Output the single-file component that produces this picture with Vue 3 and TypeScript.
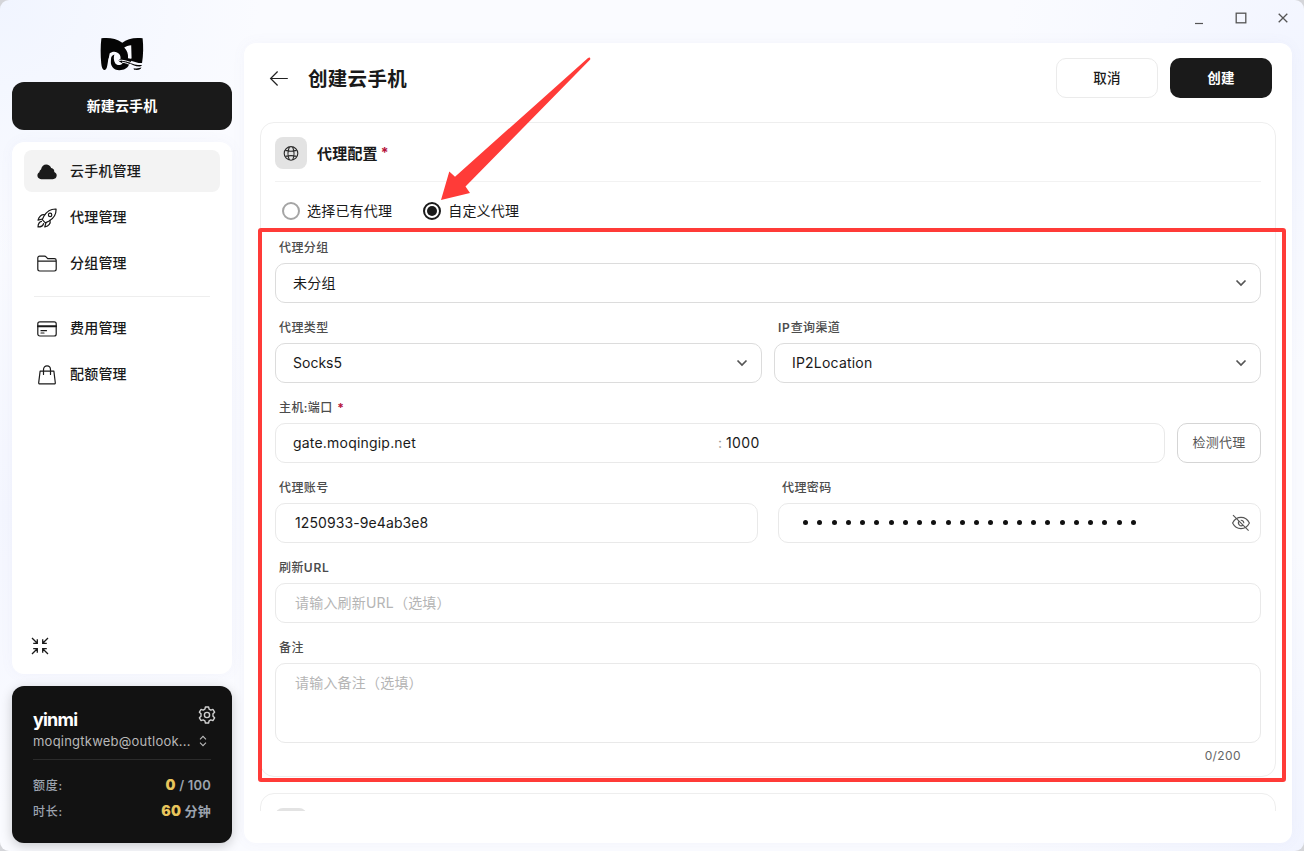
<script setup lang="ts">
import { ref } from 'vue'

interface NavItem {
  id: string
  label: string
}

const primaryNav: NavItem[] = [
  { id: 'cloud', label: '云手机管理' },
  { id: 'rocket', label: '代理管理' },
  { id: 'folder', label: '分组管理' },
]
const billingNav: NavItem[] = [
  { id: 'card', label: '费用管理' },
  { id: 'bag', label: '配额管理' },
]

const active = ref('cloud')
const mode = ref<'existing' | 'custom'>('custom')
const host = ref('gate.moqingip.net')
const port = ref('1000')
const account = ref('1250933-9e4ab3e8')
const passwordLength = 24
const refreshUrl = ref('')
const note = ref('')
</script>

<template>
  <div class="window">
    <aside class="sidebar">
      <div class="logo">
        <svg width="44" height="34" viewBox="0 0 44 34">
          <path d="M1.4 1.3C9 .3 16 1.4 22.3 5.7C27 1.8 34 .2 42.6 1.2C43.5 9 43.4 18 42 26.2C38 26.4 34.6 24.6 30.8 23.8C32 25.4 30 26.4 28.8 28C27.4 31.2 24 33.2 19.4 33.2C13.2 33.2 10.4 28.6 10.6 23C10.7 20.4 11.1 18.4 11.8 16.6C9.4 18 8.4 21 7.8 25.4C7.2 29.6 6.6 32.4 4.8 32.9C2.6 33.2 1.7 30.5 1.2 26C.5 18.5.4 8.8 1.4 1.3Z" fill="#050505" />
          <path d="M9.6 16.6C12.6 13.6 17 14.2 19.4 17.2C20.6 18.8 20.8 20.6 20.4 22.2C18.4 22.4 18.2 23.6 19.6 24.8L22.6 26.4C20 28.8 16.8 28.4 15.2 26.2C13.4 23.6 13.6 19.6 14.4 17.6C13 18 12 18.8 11.2 20.4L10.4 26.4L8.4 25Z" fill="#fafbff" />
          <path d="M24.2 10.6C26 9 28.6 8.4 31.2 8.2L31.6 21.6C30.4 21.7 29.2 21.6 28 21.2C28.4 17 27 13.4 24.2 10.6Z" fill="#fafbff" />
          <path d="M19 23.4C26 22.2 31 27.6 42.6 26.6M22 25.2C28 25.6 31.6 30 41.8 29.4" fill="none" stroke="#fafbff" stroke-width="1" />
          <path d="M28 25.4C32 26 35 28.6 42 28C41.6 28.8 41 29.4 39.6 29.4C34.8 29.4 32 27.4 28 25.4ZM33.6 31.2C36.6 31.7 39.5 31.3 41.4 30.6C41 32.8 38.6 33.2 34 32.8Z" fill="#050505" />
        </svg>
      </div>
      <button class="new-phone">新建云手机</button>

      <nav class="nav">
        <a v-for="item in primaryNav" :key="item.id" class="nav-item" :class="{ active: active === item.id }" @click="active = item.id">
          <svg v-if="item.id === 'cloud'" width="20" height="20" viewBox="0 0 20 20">
            <path d="M4 7.4C4.8 4.2 6.7 2.4 9.2 2.4C11.6 2.4 13.3 3.8 14.2 6C16.3 6.2 17.5 8 17.3 9.9C18.9 10.6 19.8 12 19.7 13.6C19.6 15.8 18 17.2 15.8 17.2H4.2C2 17.2.4 15.7.4 13.6C.4 12 1.2 10.8 2.4 10.2C2.3 9 3 7.9 4 7.4Z" fill="#1a1a1a" />
          </svg>
          <svg v-else-if="item.id === 'rocket'" width="20" height="20" viewBox="0 0 20 20" class="line">
            <path d="M19.1 1C14.2.8 9.9 3.1 7 8L5.2 11.7L8.4 14.9L12.1 13C17 10.2 19.2 5.8 19.1 1Z" />
            <circle cx="13.1" cy="6.9" r="1.7" />
            <path d="M7.7 6.9C4.8 6.1 2.1 8 1 12.2L5.4 11M13 12.4C13.9 15.2 12 17.9 7.8 19L8.9 14.8M4.5 13.4C2.2 14 1.1 16 1 19C4 18.9 6.1 17.8 6.6 15.5" />
          </svg>
          <svg v-else width="20" height="20" viewBox="0 0 20 20" class="line">
            <path d="M.8 15.1V4C.8 2.9 1.6 2.2 2.6 2.2H7.5C8.2 2.2 8.7 2.4 9.1 2.9L10.7 4.6H17.3C18.4 4.6 19.2 5.4 19.2 6.4V15.1C19.2 16.2 18.4 17 17.3 17H2.7C1.6 17 .8 16.2.8 15.1ZM1 7.1H19" />
          </svg>
          <span>{{ item.label }}</span>
        </a>
        <div class="nav-divider"></div>
        <a v-for="item in billingNav" :key="item.id" class="nav-item" :class="{ active: active === item.id }" @click="active = item.id">
          <svg v-if="item.id === 'card'" width="20" height="20" viewBox="0 0 20 20" class="line">
            <rect x=".8" y="2.8" width="18.4" height="14.2" rx="2" />
            <path d="M1 7.2H19" stroke-width="2" />
            <path d="M4 11.7H9.5M4 14H7" />
          </svg>
          <svg v-else width="20" height="20" viewBox="0 0 20 20" class="line">
            <path d="M3.1 6.2H16.9L18.3 17.7C18.4 18.4 18 18.9 17.3 18.9H2.7C2 18.9 1.6 18.4 1.7 17.7ZM6.5 9.4V4.7C6.5 2.4 8 .8 10 .8C12 .8 13.5 2.4 13.5 4.7V9.4" />
          </svg>
          <span>{{ item.label }}</span>
        </a>
        <button class="collapse" aria-label="collapse">
          <svg width="18" height="18" viewBox="0 0 18 18">
            <path d="M1 1L6.3 6.3M6.3 2.3V6.3H2.2M17 1L11.7 6.3M11.7 2.3V6.3H15.8M1 17L6.3 11.7M6.3 15.7V11.7H2.2M17 17L11.7 11.7M11.7 15.7V11.7H15.8" fill="none" stroke="#1a1a1a" stroke-width="1.3" />
          </svg>
        </button>
      </nav>

      <section class="profile">
        <div class="profile-head">
          <strong>yinmi</strong>
          <svg width="18" height="18" viewBox="0 0 18 18" fill="none" stroke="#d0d0d0" stroke-width="1.4" stroke-linejoin="round">
            <path d="M7.4 1H10.6L11.1 3.1L12.8 4.1L14.9 3.4L16.6 6.2L15 7.8V10.2L16.6 11.8L14.9 14.6L12.8 13.9L11.1 14.9L10.6 17H7.4L6.9 14.9L5.2 13.9L3.1 14.6L1.4 11.8L3 10.2V7.8L1.4 6.2L3.1 3.4L5.2 4.1L6.9 3.1Z" />
            <circle cx="9" cy="9" r="2.6" />
          </svg>
        </div>
        <div class="mail">
          <span>moqingtkweb@outlook...</span>
          <svg width="8" height="12" viewBox="0 0 8 12"><path d="M1 4.3L4 1.3L7 4.3M1 7.7L4 10.7L7 7.7" fill="none" stroke="#bbb" stroke-width="1.1" /></svg>
        </div>
        <div class="quota first"><span class="name">额度:</span><span class="value"><b>0</b> / 100</span></div>
        <div class="quota"><span class="name">时长:</span><span class="value"><b>60</b> 分钟</span></div>
      </section>
    </aside>

    <div class="content">
      <div class="titlebar">
        <svg width="12" height="14" viewBox="0 0 12 14"><path d="M2 12.5H10" stroke="#555" stroke-width="1.2" /></svg>
        <svg width="12" height="12" viewBox="0 0 12 12"><rect x="1.2" y="1.2" width="9.6" height="9.6" fill="none" stroke="#555" stroke-width="1.3" /></svg>
        <svg width="12" height="12" viewBox="0 0 12 12"><path d="M1.7 1.7L10.3 10.3M10.3 1.7L1.7 10.3" stroke="#555" stroke-width="1.3" /></svg>
      </div>

      <main class="panel">
        <header class="page-head">
          <svg class="back" width="20" height="16" viewBox="0 0 20 16"><path d="M18.8 8.5H1.8M8.6 1.5L1.6 8.5L8.6 15.5" fill="none" stroke="#222" stroke-width="1.2" /></svg>
          <h1>创建云手机</h1>
          <button class="btn"><span>取消</span></button>
          <button class="btn primary"><span>创建</span></button>
        </header>

        <div class="scroll">
          <section class="card">
            <div class="card-head">
              <span class="badge">
                <svg width="16" height="16" viewBox="0 0 16 16" fill="none" stroke="#2a2a2a" stroke-width="1.1">
                  <circle cx="8" cy="8.4" r="6.8" />
                  <path d="M2.3 5.4Q8 7 13.7 5.4M2.3 11.4Q8 9.8 13.7 11.4M6.4 1.9C4.6 5.9 4.6 10.9 6.4 14.9M9.6 1.9C11.4 5.9 11.4 10.9 9.6 14.9" />
                </svg>
              </span>
              <h2>代理配置</h2><i class="req">*</i>
            </div>

            <div class="radios">
              <label @click="mode = 'existing'"><i class="radio" :class="{ on: mode === 'existing' }"></i><span>选择已有代理</span></label>
              <label @click="mode = 'custom'"><i class="radio" :class="{ on: mode === 'custom' }"></i><span>自定义代理</span></label>
            </div>

            <div class="field">
              <div class="label">代理分组</div>
              <div class="box select"><span>未分组</span><svg width="12" height="8" viewBox="0 0 12 8"><path d="M1.5 1.5L6 6L10.5 1.5" /></svg></div>
            </div>
            <div class="row types">
              <div class="field">
                <div class="label">代理类型</div>
                <div class="box select"><span class="socks">Socks5</span><svg width="12" height="8" viewBox="0 0 12 8"><path d="M1.5 1.5L6 6L10.5 1.5" /></svg></div>
              </div>
              <div class="field">
                <div class="label"><b>IP</b>查询渠道</div>
                <div class="box select"><span>IP2Location</span><svg width="12" height="8" viewBox="0 0 12 8"><path d="M1.5 1.5L6 6L10.5 1.5" /></svg></div>
              </div>
            </div>
            <div class="row hostrow">
              <div class="field">
                <div class="label">主机:端口 <i class="req">*</i></div>
                <div class="box pair"><span class="host">{{ host }}</span><span class="colon">:</span><span class="port">{{ port }}</span></div>
              </div>
              <button class="check"><span>检测代理</span></button>
            </div>
            <div class="row auth">
              <div class="field">
                <div class="label">代理账号</div>
                <div class="box text"><span class="account">{{ account }}</span></div>
              </div>
              <div class="field">
                <div class="label">代理密码</div>
                <div class="box text password">
                  <span class="dots"><i v-for="n in passwordLength" :key="n"></i></span>
                  <svg width="20" height="18" viewBox="0 0 20 18" fill="none" stroke="#555" stroke-width="1.15">
                    <path d="M1.6 9C5.4 1.5 14.6 1.5 18.4 9C14.6 16.5 5.4 16.5 1.6 9Z" />
                    <path d="M8 7A3 3 0 0 0 12 11.3M9.7 6.3A2.8 2.8 0 0 1 12.8 9.2M2 1.2L17.6 16.7" />
                  </svg>
                </div>
              </div>
            </div>
            <div class="field">
              <div class="label">刷新<b>URL</b></div>
              <div class="box text"><span class="hint">{{ refreshUrl || '请输入刷新URL（选填）' }}</span></div>
            </div>
            <div class="field">
              <div class="label">备注</div>
              <div class="box area"><span class="hint">{{ note || '请输入备注（选填）' }}</span></div>
              <div class="count">{{ note.length }}/200</div>
            </div>
          </section>

          <section class="card next"><span class="badge"></span></section>
        </div>
      </main>
    </div>

    <div class="highlight"></div>
    <svg class="arrow" width="160" height="150" viewBox="440 55 160 150">
      <path d="M441 200L449.3 171.5L455 176.7L588 58Q590.7 56.7 590.2 59.5L465.5 186.5L470 193Z" fill="#ff3b38" />
    </svg>
  </div>
</template>

<style>
body {
  margin: 0;
  background: #d4d5d9;
}
</style>

<style scoped>
.window {
  position: relative;
  box-sizing: border-box;
  width: 1304px;
  height: 851px;
  display: flex;
  gap: 12px;
  padding: 0 12px 8px;
  overflow: hidden;
  border-radius: 9px;
  background:
    radial-gradient(circle at 0 0, #f1f5ff 0, rgba(241, 245, 255, 0) 260px),
    radial-gradient(circle at 100% 8%, #f2f5ff 0, rgba(242, 245, 255, 0) 300px),
    radial-gradient(circle at 100% 100%, #f1f4ff 0, rgba(241, 244, 255, 0) 300px),
    radial-gradient(circle at 0 60%, #f4f6ff 0, rgba(244, 246, 255, 0) 300px),
    #fafbff;
  color: #1a1a1a;
  font-family: Inter, "Noto Sans CJK SC", sans-serif;
  font-size: 14px;
  letter-spacing: 0.2px;
}
.window *,
.window *::before {
  box-sizing: border-box;
}
button {
  padding: 0;
  font: inherit;
  letter-spacing: inherit;
  color: inherit;
}
i {
  font-style: normal;
}

.sidebar {
  width: 220px;
  flex: none;
  display: flex;
  flex-direction: column;
}
.logo {
  height: 82px;
  padding: 37px 0 0 88px;
}
.logo svg {
  display: block;
}
.new-phone {
  height: 48px;
  padding-bottom: 2px;
  border: 0;
  border-radius: 12px;
  background: #1a1a1a;
  color: #fff;
  font-weight: 700;
  letter-spacing: 0.1px;
}
.nav {
  display: flex;
  flex-direction: column;
  height: 532px;
  margin: 12px 0;
  padding: 8px 12px;
  border-radius: 12px;
  background: #fff;
  box-shadow: 0 0 14px rgba(110, 120, 180, 0.05);
}
.nav-item {
  display: flex;
  align-items: center;
  gap: 13px;
  height: 42px;
  margin-bottom: 4px;
  padding: 0 13px;
  border-radius: 8px;
  font-weight: 500;
}
.nav-item.active {
  background: #f3f3f3;
}
.nav-item span {
  padding-bottom: 2px;
}
.nav-item svg {
  flex: none;
  margin-top: 2px;
}
.line {
  fill: none;
  stroke: #1a1a1a;
  stroke-width: 1.2;
  stroke-linejoin: round;
  stroke-linecap: round;
}
.nav-divider {
  height: 1px;
  margin: 8px 10px 10px;
  background: #eee;
}
.collapse {
  width: 18px;
  height: 18px;
  margin: auto 0 11px 7px;
  border: 0;
  background: none;
}
.collapse svg {
  display: block;
}

.profile {
  height: 157px;
  padding: 20px 21px 0;
  border-radius: 12px;
  background: #121212;
  box-shadow: 0 3px 12px rgba(0, 0, 0, 0.2);
}
.profile-head {
  display: flex;
  justify-content: space-between;
  height: 25px;
  margin-right: -5px;
}
.profile-head strong {
  font-size: 18px;
  line-height: 27px;
  font-weight: 700;
  letter-spacing: -0.8px;
  color: #fff;
}
.mail {
  display: flex;
  align-items: center;
  gap: 8px;
  height: 20px;
  font-size: 13px;
  letter-spacing: 0.23px;
  color: #b8b8b8;
  white-space: nowrap;
}
.mail span {
  padding-bottom: 1px;
}
.quota {
  display: flex;
  align-items: center;
  justify-content: space-between;
  height: 26px;
  font-size: 12px;
  font-weight: 500;
  color: #9ca3af;
}
.quota.first {
  height: 39px;
  margin-top: 8px;
  padding-top: 12px;
  border-top: 1px solid #2b2b2b;
}
.quota .name {
  letter-spacing: 0.7px;
}
.quota span {
  padding-bottom: 2px;
}
.value {
  font-size: 13px;
  font-weight: 600;
}
.value b {
  font-size: 14px;
  color: #e8c55c;
}

.content {
  flex: 1;
  min-width: 0;
}
.titlebar {
  display: flex;
  align-items: center;
  justify-content: flex-end;
  gap: 30px;
  height: 43px;
  padding: 0 3px 7px 0;
}
.panel {
  height: 800px;
  padding: 15px 16px 0;
  border-radius: 12px;
  background: #fff;
  box-shadow: 0 0 14px rgba(110, 120, 180, 0.05);
}
.page-head {
  display: flex;
  align-items: center;
  gap: 12px;
  height: 40px;
  padding: 0 4px 0 9px;
}
.page-head h1 {
  flex: 1;
  margin: 0 0 0 7px;
  padding-bottom: 2px;
  font-size: 19.5px;
  font-weight: 700;
  letter-spacing: 0.3px;
}
.btn {
  width: 102px;
  height: 40px;
  padding-bottom: 2px;
  border: 1px solid #ebebeb;
  border-radius: 10px;
  background: #fff;
  font-size: 13.5px;
  font-weight: 500;
}
.btn.primary {
  border: 0;
  background: #1a1a1a;
  color: #fff;
  font-weight: 700;
}

.scroll {
  height: 689px;
  margin-top: 24px;
  overflow: hidden;
}
.card {
  height: 655px;
  padding: 14px 14px 0;
  border: 1px solid #eee;
  border-radius: 14px;
}
.card.next {
  height: 100px;
  margin-top: 16px;
}
.card-head {
  display: flex;
  align-items: center;
  height: 45px;
  padding-bottom: 13px;
  border-bottom: 1px solid #f2f2f2;
}
.badge {
  display: flex;
  align-items: center;
  justify-content: center;
  width: 32px;
  height: 32px;
  border-radius: 8px;
  background: #e3e3e3;
}
.card-head h2 {
  margin: 0 3px 0 10px;
  padding-bottom: 1px;
  font-size: 15px;
  font-weight: 700;
}
.req {
  color: #b5123b;
  font-weight: 700;
}
.radios {
  display: flex;
  gap: 31px;
  height: 57px;
  padding: 0 7px;
}
.radios label {
  display: flex;
  align-items: center;
  gap: 7px;
}
.radios span {
  padding-bottom: 2px;
}
.radio {
  display: grid;
  place-items: center;
  width: 18px;
  height: 18px;
  border: 2px solid #a5a5a5;
  border-radius: 50%;
}
.radio.on {
  border-color: #1a1a1a;
}
.radio.on::before {
  content: "";
  width: 10px;
  height: 10px;
  border-radius: 50%;
  background: #1a1a1a;
}

.field {
  height: 80px;
  flex: 1;
  min-width: 0;
}
.label {
  height: 24px;
  padding: 0 4px;
  font-size: 12px;
  line-height: 17px;
  font-weight: 500;
  color: #4c4c4c;
  letter-spacing: 0.4px;
}
.label b {
  font-weight: 600;
  letter-spacing: 0.8px;
}
.box {
  display: flex;
  align-items: center;
  height: 40px;
  border: 1px solid #e9e9e9;
  border-radius: 10px;
  background: #fff;
}
.box > span {
  padding-bottom: 2px;
}
.box.select {
  justify-content: space-between;
  padding: 0 13px 0 17px;
  border-color: #dcdcdc;
}
.socks {
  letter-spacing: 0;
}
.select svg {
  fill: none;
  stroke: #555;
  stroke-width: 1.7;
}
.box.text {
  padding: 0 9px 0 19px;
}
.account {
  letter-spacing: 0.1px;
}
.row {
  display: flex;
  gap: 12px;
}
.row.auth {
  gap: 20px;
}
.hostrow .req {
  margin-left: 1px;
}
.pair {
  padding-left: 17px;
}
.host {
  width: 425px;
}
.colon {
  width: 8px;
  color: #999;
}
.port {
  letter-spacing: 0.4px;
}
.check {
  width: 84px;
  height: 40px;
  margin-top: 24px;
  padding-bottom: 3px;
  border: 1px solid #d5d5d5;
  border-radius: 10px;
  background: #fff;
  color: #555;
  font-size: 13px;
}
.password {
  justify-content: space-between;
}
.box.password {
  padding-left: 24px;
}
.dots {
  display: flex;
  gap: 9.26px;
}
.dots i {
  width: 5px;
  height: 5px;
  border-radius: 50%;
  background: #111;
}
.hint {
  color: #b5b5b5;
}
.box.area {
  height: 80px;
  align-items: flex-start;
  padding: 8px 19px;
}
.count {
  padding-right: 20px;
  font-size: 12px;
  line-height: 26px;
  text-align: right;
  color: #666;
  letter-spacing: 0.4px;
}

.highlight {
  position: absolute;
  left: 258px;
  top: 228px;
  width: 1028px;
  height: 554px;
  border: 4px solid #ff3b38;
  border-radius: 3px;
}
.arrow {
  position: absolute;
  left: 440px;
  top: 55px;
}
</style>
